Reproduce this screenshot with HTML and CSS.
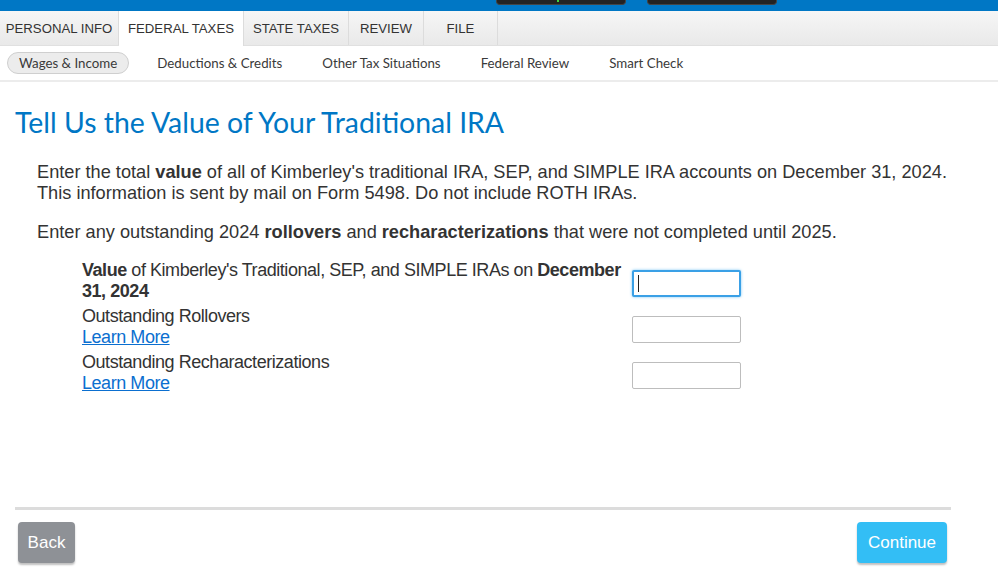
FILE: index.html
```html
<!DOCTYPE html>
<html lang="en">
<head>
    <meta charset="UTF-8">
    <meta name="viewport" content="width=device-width, initial-scale=1.0">
    <title>Traditional IRA Value</title>
    <link rel="stylesheet" href="styles.css">
</head>
<body>
    <div class="topbar">
        <div class="top-btn"><span class="dot"></span></div>
        <div class="top-btn"></div>
    </div>

    <div class="tabs">
        <div class="tab tab-personal">PERSONAL INFO</div>
        <div class="tab tab-federal active">FEDERAL TAXES</div>
        <div class="tab tab-state">STATE TAXES</div>
        <div class="tab tab-review">REVIEW</div>
        <div class="tab tab-file">FILE</div>
        <div class="tab-rest"></div>
    </div>

    <div class="subnav">
        <span class="sub-item current">Wages &amp; Income</span>
        <span class="sub-item">Deductions &amp; Credits</span>
        <span class="sub-item">Other Tax Situations</span>
        <span class="sub-item">Federal Review</span>
        <span class="sub-item">Smart Check</span>
    </div>

    <div class="content">
        <h1>Tell Us the Value of Your Traditional IRA</h1>

        <div class="intro">
            <p>Enter the total <b>value</b> of all of Kimberley's traditional IRA, SEP, and SIMPLE IRA accounts on December 31, 2024. This information is sent by mail on Form 5498. Do not include ROTH IRAs.</p>
            <p>Enter any outstanding 2024 <b>rollovers</b> and <b>recharacterizations</b> that were not completed until 2025.</p>
        </div>

        <div class="form">
            <div class="form-row">
                <label for="iraValue"><b>Value</b> of Kimberley's Traditional, SEP, and SIMPLE IRAs on <b>December 31, 2024</b></label>
                <span class="field">
                    <input type="text" id="iraValue" class="focused">
                    <span class="caret"></span>
                </span>
            </div>
            <div class="form-row">
                <label for="rollovers">Outstanding Rollovers<br><a href="#">Learn More</a></label>
                <span class="field"><input type="text" id="rollovers"></span>
            </div>
            <div class="form-row">
                <label for="recharacterizations">Outstanding Recharacterizations<br><a href="#">Learn More</a></label>
                <span class="field"><input type="text" id="recharacterizations"></span>
            </div>
        </div>
    </div>

    <div class="footer">
        <button class="btn btn-back">Back</button>
        <button class="btn btn-continue">Continue</button>
    </div>
</body>
</html>
```

FILE: styles.css
```css
body {
    margin: 0;
    font-family: "Liberation Sans", Arial, sans-serif;
    color: #333;
    background-color: white;
    width: 998px;
    height: 574px;
    overflow: hidden;
}
.topbar {
    height: 11px;
    background-color: #0077c5;
    display: flex;
    padding-left: 496px;
    gap: 21px;
}
.top-btn {
    width: 130px;
    height: 5px;
    background-color: #232323;
    border-radius: 0 0 4px 4px;
    border: 1px solid #444;
    border-top: none;
    box-sizing: border-box;
    position: relative;
}
.dot {
    position: absolute;
    left: 60px;
    top: 0;
    width: 2px;
    height: 2px;
    background-color: #3fd43f;
}
.tabs {
    display: flex;
    height: 35px;
    background: linear-gradient(#f6f6f6, #e9e9e9);
    border-bottom: 1px solid #e0e0e0;
    box-sizing: border-box;
}
.tab {
    font-size: 13.2px;
    line-height: 35px;
    text-align: center;
    border-right: 1px solid #dcdcdc;
    color: #333;
}
.tab-personal { width: 118px; }
.tab-federal { width: 124px; }
.tab-state { width: 104px; }
.tab-review { width: 74px; }
.tab-file { width: 73px; }
.tab.active {
    background: white;
    height: 35px;
}
.tab-rest {
    flex: 1;
}
.subnav {
    height: 34px;
    display: flex;
    align-items: center;
    padding-left: 7px;
    border-bottom: 2px solid #ececec;
    font-family: Lato, "Noto Sans", sans-serif;
    font-size: 13.3px;
    color: #3a3a3a;
}
.sub-item {
    margin-right: 40px;
}
.sub-item.current {
    display: inline-block;
    padding: 2px 11px;
    border: 1px solid #cfcfcf;
    border-radius: 12px;
    background-color: #ececec;
    margin-right: 28px;
}
.content {
    padding: 0 15px;
}
h1 {
    margin: 23px 0 0;
    font-family: Lato, "Noto Sans", sans-serif;
    font-weight: normal;
    font-size: 28.4px;
    color: #0077c5;
}
.intro {
    padding-left: 22px;
    margin-top: 23px;
    font-size: 18.2px;
    line-height: 21px;
}
.intro p {
    margin: 0 0 18px;
    max-width: 915px;
}
.intro p:last-child {
    margin-bottom: 16px;
}
.form {
    padding-left: 67px;
    font-size: 18px;
    line-height: 21px;
}
.form-row {
    display: flex;
    align-items: flex-start;
    margin-bottom: 3px;
}
.form-row label {
    width: 550px;
    padding-top: 1px;
    letter-spacing: -0.45px;
}
.field {
    position: relative;
    margin-top: 11px;
}
.field input {
    display: block;
    width: 109px;
    height: 27px;
    box-sizing: border-box;
    border: 1px solid #bdbdbd;
    border-radius: 2px;
    font-size: 16px;
    padding: 2px 4px;
}
.field input.focused {
    border: 2px solid #3aa0e6;
    box-shadow: 0 0 3px #7cc6f3;
    outline: none;
}
.caret {
    position: absolute;
    left: 6px;
    top: 5px;
    width: 1px;
    height: 17px;
    background-color: #222;
}
.form-row a {
    color: #0b6fd0;
    text-decoration: underline;
}
.footer {
    position: absolute;
    top: 507px;
    left: 15px;
    width: 936px;
    border-top: 3px solid #dcdcdc;
    display: flex;
    justify-content: space-between;
    padding-top: 12px;
}
.btn {
    height: 41px;
    border: none;
    border-radius: 4px;
    color: white;
    font-family: "Liberation Sans", Arial, sans-serif;
    font-size: 17px;
    cursor: pointer;
    box-shadow: 0 2px 2px rgba(0, 0, 0, 0.25);
}
.btn-back {
    margin-left: 3px;
    width: 57px;
    background-color: #8e9196;
}
.btn-continue {
    width: 90px;
    margin-right: 4px;
    background-color: #33bef5;
}
```
